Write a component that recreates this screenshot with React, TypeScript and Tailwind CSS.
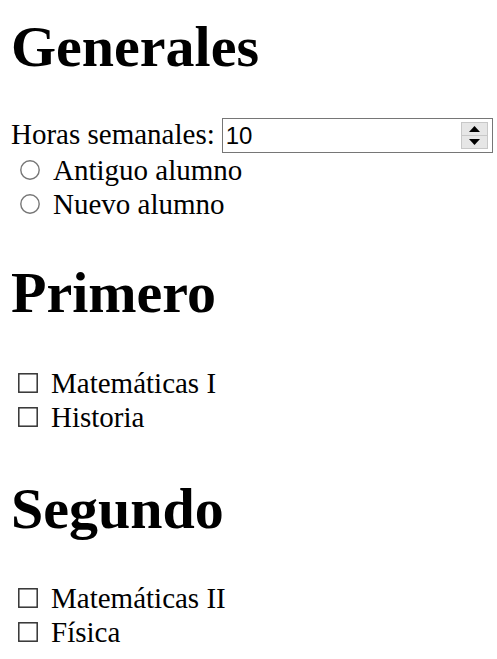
import React from 'react';

function Radio() {
  return (
    <svg width="20" height="20" viewBox="0 0 20 20" className="shrink-0">
      <circle cx="10" cy="10" r="9.2" fill="#fff" stroke="#767676" strokeWidth="1.4" />
    </svg>
  );
}

function Checkbox() {
  return (
    <svg width="20" height="20" viewBox="0 0 20 20" className="shrink-0">
      <rect x="0.8" y="0.8" width="18.4" height="18.4" fill="#fff" stroke="#333" strokeWidth="1.5" />
    </svg>
  );
}

function Spinner() {
  return (
    <div className="flex flex-col w-[27px] h-[27px] mr-[4px] border border-[#c8c8c8] bg-[#e6e6e6]">
      <div className="flex-1 flex items-center justify-center border-b border-[#c8c8c8]">
        <svg width="11" height="6" viewBox="0 0 11 6">
          <polygon points="5.5,0 11,6 0,6" fill="#000" />
        </svg>
      </div>
      <div className="flex-1 flex items-center justify-center">
        <svg width="11" height="6" viewBox="0 0 11 6">
          <polygon points="0,0 11,0 5.5,6" fill="#000" />
        </svg>
      </div>
    </div>
  );
}

function RadioRow({ label }: { label: string }) {
  return (
    <label className="flex items-center h-[34px]">
      <span className="ml-[9px]">
        <Radio />
      </span>
      <span className="ml-[13px]">{label}</span>
    </label>
  );
}

function CheckRow({ label }: { label: string }) {
  return (
    <label className="flex items-center h-[34px]">
      <span className="ml-[7px]">
        <Checkbox />
      </span>
      <span className="ml-[13px]">{label}</span>
    </label>
  );
}

export default function App() {
  return (
    <div className="bg-white min-h-screen px-[11px] pt-[13px] font-['Liberation_Serif',serif] text-[29px] leading-[34px] text-black">
      <h1 className="text-[58px] leading-[67px] font-bold">Generales</h1>

      <div className="mt-[37px] flex items-start">
        <span className="whitespace-nowrap">Horas semanales:</span>
        <div className="ml-[7px] mt-[1px] w-[271px] h-[35px] border border-[#767676] flex items-center">
          <input
            type="text"
            defaultValue="10"
            className="flex-1 min-w-0 pl-[3px] h-full outline-none bg-transparent font-['Liberation_Sans',Arial,sans-serif] text-[24px]"
          />
          <Spinner />
        </div>
      </div>
      <RadioRow label="Antiguo alumno" />
      <RadioRow label="Nuevo alumno" />

      <h1 className="mt-[38px] text-[58px] leading-[67px] font-bold">Primero</h1>
      <div className="mt-[40px]">
        <CheckRow label="Matemáticas I" />
        <CheckRow label="Historia" />
      </div>

      <h1 className="mt-[41px] text-[58px] leading-[67px] font-bold">Segundo</h1>
      <div className="mt-[39px]">
        <CheckRow label="Matemáticas II" />
        <CheckRow label="Física" />
      </div>
    </div>
  );
}
